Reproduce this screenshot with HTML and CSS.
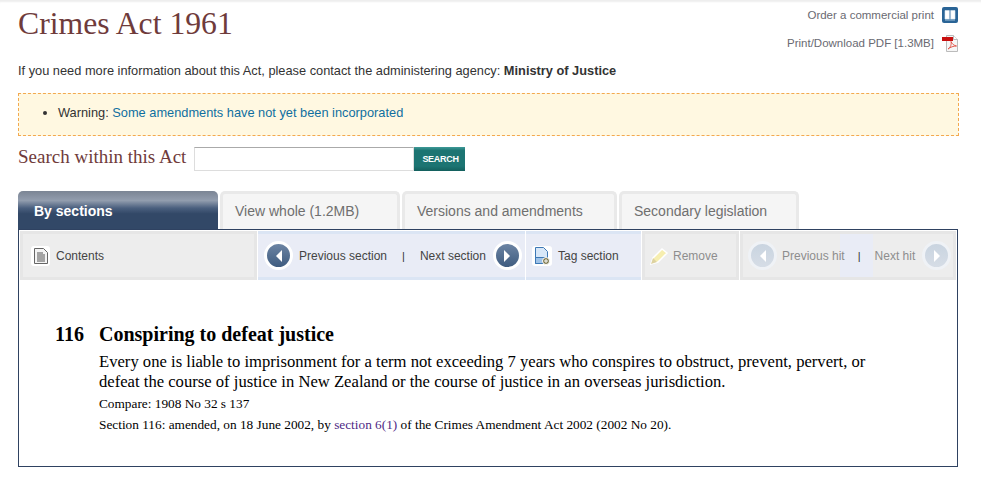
FILE: index.html
```html
<!DOCTYPE html>
<html lang="en">
<head>
  <meta charset="UTF-8">
  <title>Crimes Act 1961</title>
  <link rel="stylesheet" href="styles.css">
</head>
<body>
  <div class="container">
    <div class="header">
      <h1>Crimes Act 1961</h1>
      <div class="header-links">
        <a class="header-link" href="#">Order a commercial print
          <svg class="header-icon" width="16" height="16" viewBox="0 0 16 16">
            <rect width="16" height="16" rx="2" fill="#2a6496"/>
            <path d="M3 3.500h4.300v8.500H3zM8.700 3.500H13V12H8.700z" fill="#fff" stroke="#dbe7f1" stroke-width=".6"/>
            <path d="M3 13h10" stroke="#9fc0da"/>
          </svg>
        </a>
        <a class="header-link" href="#">Print/Download PDF [1.3MB]
          <svg class="header-icon" width="16" height="17" viewBox="0 0 16 17">
            <path d="M4.500.5h7l4 4v12h-11z" fill="#f6f6f6" stroke="#bbb"/>
            <path d="M11.500.5v4h4" fill="#fff" stroke="#bbb"/>
            <path d="M6 14c3-2 3.500-5 3-7.500C10 9 12 10.500 14.500 11c-3 0-6 1-8.500 3z" fill="none" stroke="#e2574c"/>
            <rect y="2" width="11" height="4" fill="#c80f0f"/>
          </svg>
        </a>
      </div>
    </div>

    <p class="agency">If you need more information about this Act, please contact the administering agency: <b>Ministry of Justice</b></p>

    <div class="warning">
      <ul>
        <li>Warning: <a href="#">Some amendments have not yet been incorporated</a></li>
      </ul>
    </div>

    <form class="search">
      <label for="actSearch">Search within this Act</label>
      <input type="text" id="actSearch">
      <button type="button">SEARCH</button>
    </form>

    <div class="tabs">
      <a class="tab active tab-sections" href="#">By sections</a>
      <a class="tab tab-whole" href="#">View whole (1.2MB)</a>
      <a class="tab tab-versions" href="#">Versions and amendments</a>
      <a class="tab tab-secondary" href="#">Secondary legislation</a>
    </div>

    <div class="panel">
      <div class="toolbar">
        <div class="tool tool-contents">
          <span class="icon-chip">
            <svg width="14" height="16" viewBox="0 0 14 16">
              <path d="M.5.500h9l4 4v11H.5z" fill="#f4f4f4" stroke="#666"/>
              <path d="M3 5h6M3 7h8M3 9h8M3 11h8M3 13h8" stroke="#555"/>
            </svg>
          </span>
          Contents
        </div>
        <div class="tool tool-blue tool-sections">
          <span class="round-btn">
            <svg width="8" height="12" viewBox="0 0 8 12"><path d="M7 0v12L1 6z" fill="#fff"/></svg>
          </span>
          <span>Previous section</span>
          <span class="pipe">|</span>
          <span>Next section</span>
          <span class="round-btn">
            <svg width="8" height="12" viewBox="0 0 8 12"><path d="M1 0v12l6-6z" fill="#fff"/></svg>
          </span>
        </div>
        <div class="tool tool-blue tool-tag">
          <span class="icon-chip">
            <svg width="16" height="18" viewBox="0 0 16 18">
              <path d="M1.500.500h8l4 4v12h-12z" fill="#d7e7f8" stroke="#3d78b5"/>
              <path d="M1.500 10.500h12v6h-12z" fill="#9fc3e8" stroke="#3d78b5"/>
              <circle cx="12" cy="14" r="3.500" fill="#7a7448" stroke="#fff"/>
              <path d="M10 14h4M12 12v4" stroke="#fff"/>
            </svg>
          </span>
          Tag section
        </div>
        <div class="tool tool-off tool-remove">
          <svg width="20" height="18" viewBox="0 0 20 18">
            <path d="M1 17l2-6L12 2l5 4-9 9z" fill="#f6eeb0" stroke="#fff" stroke-width="1.500"/>
            <path d="M1 17l2-6 4 4z" fill="#ddd2a0"/>
          </svg>
          Remove
        </div>
        <div class="tool tool-off tool-hits">
          <span class="round-btn">
            <svg width="8" height="12" viewBox="0 0 8 12"><path d="M7 0v12L1 6z" fill="#fff"/></svg>
          </span>
          <span>Previous hit</span>
          <span class="pipe">|</span>
          <span>Next hit</span>
          <span class="round-btn">
            <svg width="8" height="12" viewBox="0 0 8 12"><path d="M1 0v12l6-6z" fill="#fff"/></svg>
          </span>
        </div>
      </div>

      <div class="section">
        <h2><span class="section-no">116</span>Conspiring to defeat justice</h2>
        <div class="section-body">
          <p class="text">Every one is liable to imprisonment for a term not exceeding 7 years who conspires to obstruct, prevent, pervert, or defeat the course of justice in New Zealand or the course of justice in an overseas jurisdiction.</p>
          <p class="note">Compare: 1908 No 32 s 137</p>
          <p class="note">Section 116: amended, on 18 June 2002, by <a href="#">section 6(1)</a> of the Crimes Amendment Act 2002 (2002 No 20).</p>
        </div>
      </div>
    </div>
  </div>
</body>
</html>
```

FILE: styles.css
```css
body {
  font-family: Arial, "Liberation Sans", sans-serif;
  font-size: 12.8px;
  color: #333;
  background-color: #fff;
  margin: 0;
  border-top: 1px solid #eee;
  box-shadow: inset 0 2px 2px -1px #eee;
}
a {
  text-decoration: none;
}
.container {
  width: 940px;
  margin-left: 18px;
}
.header {
  display: flex;
  justify-content: space-between;
  height: 58px;
}
h1 {
  font-family: "Liberation Serif", "Times New Roman", serif;
  font-weight: normal;
  font-size: 31.7px;
  line-height: 37px;
  color: #6f3b3b;
  margin: 4px 0 0;
}
.header-links {
  display: flex;
  flex-direction: column;
  align-items: flex-end;
  gap: 12px;
  padding-top: 6px;
}
.header-link {
  display: flex;
  align-items: center;
  gap: 8px;
  height: 16px;
  font-size: 11.5px;
  color: #6a6a72;
}
.agency {
  margin: 0;
  height: 34px;
  line-height: 24px;
  color: #333;
}
.warning {
  box-sizing: border-box;
  width: 941px;
  height: 43px;
  border: 1px dashed #f3a94f;
  background-color: #fff8e1;
  line-height: 38px;
}
.warning ul {
  margin: 0;
  padding-left: 39px;
}
.warning a {
  color: #0f6fa0;
}
.search {
  display: flex;
  align-items: center;
  margin-top: 10px;
  height: 25px;
}
.search label {
  font-family: "Liberation Serif", "Times New Roman", serif;
  font-size: 19px;
  color: #6f3b3b;
  width: 176px;
  margin-top: -3px;
}
.search input {
  width: 220px;
  height: 24px;
  padding: 0 4px;
  border: 1px solid #ddd;
  border-top-color: #aaa;
  box-sizing: border-box;
}
.search button {
  width: 51px;
  height: 24px;
  border: none;
  padding: 0 0 0 2px;
  color: #fff;
  font-family: inherit;
  font-size: 9px;
  font-weight: bold;
  letter-spacing: -.3px;
  background: linear-gradient(#3f9a98, #1c7472 15%, #1c7472 80%, #135f5d);
}
.tabs {
  display: flex;
  gap: 2px;
  margin-top: 20px;
  height: 38px;
}
.tab {
  box-sizing: border-box;
  height: 38px;
  padding: 0 12px;
  line-height: 34px;
  font-size: 14px;
  color: #6f6f6f;
  background-color: #f5f5f5;
  border: 3px solid #e9e9e9;
  border-bottom: none;
  border-radius: 5px 5px 0 0;
}
.tab.active {
  border: none;
  padding: 0 16px;
  line-height: 41px;
  color: #fff;
  font-weight: bold;
  background: linear-gradient(#7b8594, #929dae 25%, #4a5f7e 45%, #324867 60%);
}
.tab-sections { width: 200px; }
.tab-whole { width: 180px; }
.tab-versions { width: 215px; }
.tab-secondary { width: 180px; }
.panel {
  box-sizing: border-box;
  width: 940px;
  height: 238px;
  border: 1px solid #2f4261;
}
.toolbar {
  display: flex;
  gap: 1px;
  height: 49px;
  margin-top: 1px;
  margin-left: 1px;
  font-size: 12px;
  color: #444;
  white-space: nowrap;
}
.tool {
  display: flex;
  flex-shrink: 0;
  align-items: center;
  box-sizing: border-box;
  height: 49px;
  background-color: #ededed;
  box-shadow: inset 0 0 0 3px #e6e6e6;
}
.tool-blue {
  background-color: #e9ecf6;
  box-shadow: inset 0 3px 0 #dbe5f4, inset 0 -3px 0 #dbe5f4;
}
.tool-off {
  color: #8d8d8d;
}
.tool-contents {
  width: 237px;
  padding-left: 11px;
}
.tool-contents .icon-chip {
  margin-right: 6px;
}
.tool-sections {
  width: 267px;
  padding: 0 3px 0 6px;
}
.tool-tag {
  width: 115px;
  padding-left: 6px;
}
.tool-tag .icon-chip {
  width: 20px;
  margin-right: 6px;
}
.tool-remove {
  width: 97px;
  padding-left: 8px;
  gap: 3px;
}
.tool-hits {
  width: 216px;
  padding-left: 8px;
  background-image: linear-gradient(90deg, transparent 100px, #e9ecf6 100px, #e9ecf6 133px, transparent 133px);
  box-shadow: inset 0 0 0 3px #e6e6e6;
}
.icon-chip {
  display: flex;
  align-items: center;
  justify-content: center;
  width: 19px;
  height: 20px;
  background-color: #fff;
  border-radius: 3px;
}
.round-btn {
  display: flex;
  flex-shrink: 0;
  align-items: center;
  justify-content: center;
  box-sizing: border-box;
  width: 29px;
  height: 29px;
  border: 3px solid #fff;
  border-radius: 50%;
  background: linear-gradient(#6c84a3, #3f5c80);
}
.tool-off .round-btn {
  border-color: #eff2f6;
  background: linear-gradient(#c9d4e0, #d6dde6);
}
.tool-sections .round-btn:first-child {
  margin-right: 6px;
}
.tool-hits .round-btn:first-child {
  margin-right: 5px;
}
.tool-sections .round-btn:last-child,
.tool-hits .round-btn:last-child {
  margin-left: 7px;
}
.pipe {
  margin: 0 15px;
  color: #333;
  font-size: 11px;
}
.tool-hits .pipe {
  margin: 0 14px 0 13px;
}
.section {
  padding: 43px 60px 0 36px;
  font-family: "Liberation Serif", "Times New Roman", serif;
  color: #000;
}
h2 {
  margin: 0;
  font-size: 20px;
  line-height: 22px;
  color: #000;
}
.section-no {
  display: inline-block;
  width: 44px;
}
.section-body {
  margin-left: 44px;
}
.text {
  margin: 7px 0 0;
  font-size: 16.64px;
  line-height: 20px;
  width: 790px;
}
.note {
  margin: 0;
  font-size: 13.3px;
  line-height: 21px;
}
.text + .note {
  margin-top: 1px;
}
.note a {
  color: #4f2a86;
}
```
